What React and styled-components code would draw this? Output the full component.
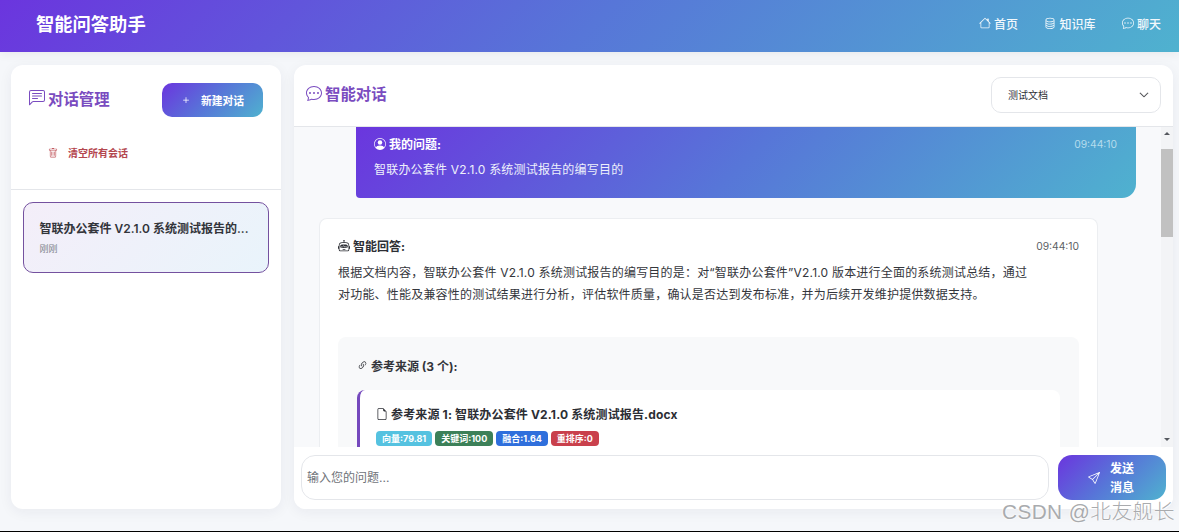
import React from "react";
import styled, { createGlobalStyle } from "styled-components";
import {
  BsHouse,
  BsDatabase,
  BsChatDots,
  BsChatLeftText,
  BsTrash,
  BsPersonCircle,
  BsRobot,
  BsLink45Deg,
  BsFileEarmark,
  BsSend,
  BsPlus,
  BsChevronDown
} from "react-icons/bs";

const brand = "linear-gradient(135deg, #6b35de 0%, #5776d8 50%, #4fb2cf 100%)";

const Global = createGlobalStyle`
  * { box-sizing: border-box; }
  html, body { margin: 0; background: #000; }
  body {
    font-family: Inter, "Noto Sans CJK SC", "Noto Sans", sans-serif;
    color: #2b2d33;
  }
`;

const Page = styled.div`
  position: relative;
  width: 1179px;
  height: 531px;
  background: #f5f7fa;
  display: flex;
  flex-direction: column;
  overflow: hidden;
`;

const TopBar = styled.header`
  height: 52px;
  flex: none;
  background: ${brand};
  color: #fff;
  display: flex;
  align-items: center;
  justify-content: space-between;
  padding: 0 18px 6px 36px;
  box-shadow: 0 2px 10px rgba(0, 0, 0, 0.06);
`;

const Brand = styled.div`
  font-size: 18.3px;
  font-weight: 700;
`;

const Nav = styled.nav`
  display: flex;
  gap: 26.5px;
`;

const NavItem = styled.a`
  display: flex;
  align-items: center;
  gap: 3px;
  font-size: 12px;
  font-weight: 500;
  color: #f2f8fc;
  svg { font-size: 12px; }
`;

const Main = styled.main`
  flex: 1;
  min-height: 0;
  display: flex;
  gap: 13px;
  padding: 13px 6px 22px 11px;
`;

const Sidebar = styled.aside`
  width: 270px;
  flex: none;
  background: #fff;
  border-radius: 12px;
  box-shadow: 0 3px 14px rgba(30, 40, 70, 0.06);
`;

const SideHead = styled.div`
  height: 125px;
  border-bottom: 1px solid #e4e6ea;
  padding: 18px 18px 0;
`;

const SideTop = styled.div`
  display: flex;
  align-items: center;
  justify-content: space-between;
`;

const PanelTitle = styled.h2`
  margin: 0;
  padding-bottom: 4px;
  display: flex;
  align-items: center;
  gap: 3px;
  font-size: 15.4px;
  font-weight: 700;
  color: #7a4cc0;
  svg { font-size: 16px; }
`;

const NewButton = styled.button`
  width: 101px;
  height: 34px;
  border: 0;
  border-radius: 10px;
  background: ${brand};
  color: #fff;
  font: inherit;
  font-size: 10.8px;
  font-weight: 600;
  display: flex;
  align-items: center;
  justify-content: center;
  gap: 9px;
  padding: 0 1px 0 0;
  svg { font-size: 12px; }
`;

const ClearButton = styled.button`
  margin: 28px 0 0 19px;
  padding: 0;
  border: 0;
  background: none;
  font: inherit;
  font-size: 10px;
  font-weight: 700;
  color: #b4474f;
  display: flex;
  align-items: center;
  gap: 10px;
  svg { font-size: 10px; color: #c0565c; }
`;

const SessionList = styled.div`
  padding: 12px 12px;
`;

const Session = styled.div`
  height: 71px;
  border: 1.5px solid #74519f;
  border-radius: 10px;
  background: linear-gradient(135deg, #f4eef9, #e9f4fb);
  padding: 17px 15.5px 0;
`;

const SessionName = styled.div`
  font-size: 12px;
  font-weight: 600;
  line-height: 18px;
  color: #33353b;
  white-space: nowrap;
`;

const SessionTime = styled.div`
  margin-top: 4px;
  font-size: 9px;
  color: #80848a;
`;

const ChatPanel = styled.section`
  flex: 1;
  min-width: 0;
  display: flex;
  flex-direction: column;
  background: #fff;
  border-radius: 12px;
  overflow: hidden;
  box-shadow: 0 3px 14px rgba(30, 40, 70, 0.06);
`;

const ChatHead = styled.div`
  height: 62px;
  flex: none;
  display: flex;
  align-items: center;
  justify-content: space-between;
  padding: 0 12px 2px 12px;
  border-bottom: 1px solid #e4e6ea;
`;

const DocSelect = styled.div`
  width: 170px;
  height: 36px;
  border: 1px solid #e4e6ea;
  border-radius: 10px;
  display: flex;
  align-items: center;
  justify-content: space-between;
  padding: 0 11px 0 16px;
  font-size: 10px;
  color: #2f3137;
  svg { font-size: 10px; stroke: currentColor; stroke-width: 0.6px; }
`;

const ChatBody = styled.div`
  flex: 1;
  min-height: 0;
  display: flex;
  background: #f8f9fb;
`;

const Messages = styled.div`
  flex: 1;
  min-width: 0;
  overflow: hidden;
  padding: 0 25px;
`;

const Question = styled.div`
  margin: -7px 0 0 37px;
  height: 78px;
  padding: 15px 19px 0 18px;
  border-radius: 4px 4px 14px 4px;
  background: ${brand};
  color: #fff;
`;

const MetaRow = styled.div`
  display: flex;
  align-items: center;
  justify-content: space-between;
`;

const Who = styled.div`
  display: flex;
  align-items: center;
  gap: 3px;
  font-size: 12px;
  font-weight: 700;
  color: ${(p) => p.$color || "inherit"};
  svg { font-size: 12px; }
`;

const Time = styled.span`
  font-size: 10.3px;
  color: ${(p) => p.$color};
`;

const QuestionText = styled.div`
  margin-top: 9px;
  font-size: 12px;
  line-height: 18px;
  letter-spacing: 0.2px;
  color: #eef0fb;
`;

const Answer = styled.article`
  margin: 20px 38px 0 0;
  padding: 18px 18px 0;
  border: 1px solid #eceef1;
  border-bottom: 0;
  border-radius: 8px 8px 0 0;
  background: #fff;
  min-height: 300px;
`;

const AnswerText = styled.p`
  margin: 8px 0 0;
  max-width: 700px;
  font-size: 12px;
  line-height: 22px;
  letter-spacing: 0.2px;
  color: #34363c;
`;

const Sources = styled.div`
  margin-top: 31px;
  padding: 20px 19px 19px;
  border-radius: 8px 8px 0 0;
  background: #f8f9fa;
`;

const SourcesTitle = styled.div`
  display: flex;
  align-items: center;
  gap: 3px;
  font-size: 12px;
  font-weight: 700;
  color: #33353b;
  svg { font-size: 11px; }
`;

const SourceCard = styled.div`
  margin-top: 16px;
  height: 90px;
  padding: 15px 15px 0 16px;
  border-left: 3px solid #7549bd;
  border-radius: 8px;
  background: #fff;
`;

const SourceName = styled.div`
  display: flex;
  align-items: center;
  gap: 3px;
  font-size: 12px;
  font-weight: 700;
  letter-spacing: 0.15px;
  color: #2c2e34;
  svg { font-size: 12px; }
`;

const Badges = styled.div`
  display: flex;
  gap: 3px;
  margin-top: 9px;
`;

const Badge = styled.span`
  height: 15px;
  padding: 0 6px;
  border-radius: 4px;
  background: ${(p) => p.$bg};
  color: #fff;
  font-size: 9px;
  font-weight: 700;
  line-height: 15px;
`;

const ScrollBar = styled.div`
  width: 12px;
  flex: none;
  display: flex;
  flex-direction: column;
  align-items: center;
  background: #f3f4f6;
`;

const Arrow = styled.span`
  flex: none;
  width: 0;
  height: 0;
  margin: 5px 0 6px;
  border-left: 3px solid transparent;
  border-right: 3px solid transparent;
  ${(p) => (p.$down ? "border-top" : "border-bottom")}: 3px solid #55585e;
`;

const Thumb = styled.div`
  width: 100%;
  height: 88px;
  margin-top: 8px;
  background: #c1c1c1;
`;

const Spacer = styled.div`
  flex: 1;
`;

const Composer = styled.div`
  flex: none;
  height: 62px;
  display: flex;
  gap: 9px;
  padding: 8px 7px 9px;
  background: #fff;
`;

const Ask = styled.input`
  flex: 1;
  min-width: 0;
  border: 1px solid #e4e6ea;
  border-radius: 14px;
  padding: 0 5px;
  background: #fff;
  font: inherit;
  font-size: 12px;
  outline: none;
  &::placeholder { color: #6f7379; }
`;

const SendButton = styled.button`
  width: 108px;
  flex: none;
  border: 0;
  border-radius: 14px;
  background: ${brand};
  color: #fff;
  font: inherit;
  font-size: 12px;
  font-weight: 600;
  line-height: 19px;
  display: flex;
  align-items: center;
  justify-content: center;
  gap: 10px;
  padding: 0 2px 0 0;
  svg { font-size: 12px; }
`;

const Watermark = styled.div`
  position: absolute;
  right: 4px;
  bottom: 7px;
  font-family: "Liberation Sans", "Noto Sans CJK SC", sans-serif;
  font-size: 20.8px;
  font-weight: 300;
  line-height: 24px;
  letter-spacing: 0.4px;
  color: #a9abae;
  text-shadow: 0 0 2px #fff, 0 0 2px #fff;
`;

const badges = [
  { label: "向量:79.81", bg: "#55c2e0" },
  { label: "关键词:100", bg: "#3c8058" },
  { label: "融合:1.64", bg: "#2f6fdc" },
  { label: "重排序:0", bg: "#c9404c" }
];

export default function App() {
  return (
    <Page>
      <Global />
      <TopBar>
        <Brand>智能问答助手</Brand>
        <Nav>
          <NavItem><BsHouse />首页</NavItem>
          <NavItem><BsDatabase />知识库</NavItem>
          <NavItem><BsChatDots />聊天</NavItem>
        </Nav>
      </TopBar>
      <Main>
        <Sidebar>
          <SideHead>
            <SideTop>
              <PanelTitle><BsChatLeftText />对话管理</PanelTitle>
              <NewButton><BsPlus />新建对话</NewButton>
            </SideTop>
            <ClearButton><BsTrash />清空所有会话</ClearButton>
          </SideHead>
          <SessionList>
            <Session>
              <SessionName>智联办公套件 V2.1.0 系统测试报告的...</SessionName>
              <SessionTime>刚刚</SessionTime>
            </Session>
          </SessionList>
        </Sidebar>
        <ChatPanel>
          <ChatHead>
            <PanelTitle><BsChatDots />智能对话</PanelTitle>
            <DocSelect>测试文档<BsChevronDown /></DocSelect>
          </ChatHead>
          <ChatBody>
            <Messages>
              <Question>
                <MetaRow>
                  <Who><BsPersonCircle />我的问题:</Who>
                  <Time $color="#b5dcec">09:44:10</Time>
                </MetaRow>
                <QuestionText>智联办公套件 V2.1.0 系统测试报告的编写目的</QuestionText>
              </Question>
              <Answer>
                <MetaRow>
                  <Who $color="#2c2e34"><BsRobot />智能回答:</Who>
                  <Time $color="#5c5f65">09:44:10</Time>
                </MetaRow>
                <AnswerText>
                  根据文档内容，智联办公套件 V2.1.0 系统测试报告的编写目的是：对“智联办公套件”V2.1.0 版本进行全面的系统测试总结，通过对功能、性能及兼容性的测试结果进行分析，评估软件质量，确认是否达到发布标准，并为后续开发维护提供数据支持。
                </AnswerText>
                <Sources>
                  <SourcesTitle><BsLink45Deg />参考来源 (3 个):</SourcesTitle>
                  <SourceCard>
                    <SourceName><BsFileEarmark />参考来源 1: 智联办公套件 V2.1.0 系统测试报告.docx</SourceName>
                    <Badges>
                      {badges.map((b) => (
                        <Badge key={b.label} $bg={b.bg}>{b.label}</Badge>
                      ))}
                    </Badges>
                  </SourceCard>
                </Sources>
              </Answer>
            </Messages>
            <ScrollBar>
              <Arrow />
              <Thumb />
              <Spacer />
              <Arrow $down />
            </ScrollBar>
          </ChatBody>
          <Composer>
            <Ask placeholder="输入您的问题..." />
            <SendButton><BsSend /><span>发送<br />消息</span></SendButton>
          </Composer>
        </ChatPanel>
      </Main>
      <Watermark>CSDN @北友舰长</Watermark>
    </Page>
  );
}
